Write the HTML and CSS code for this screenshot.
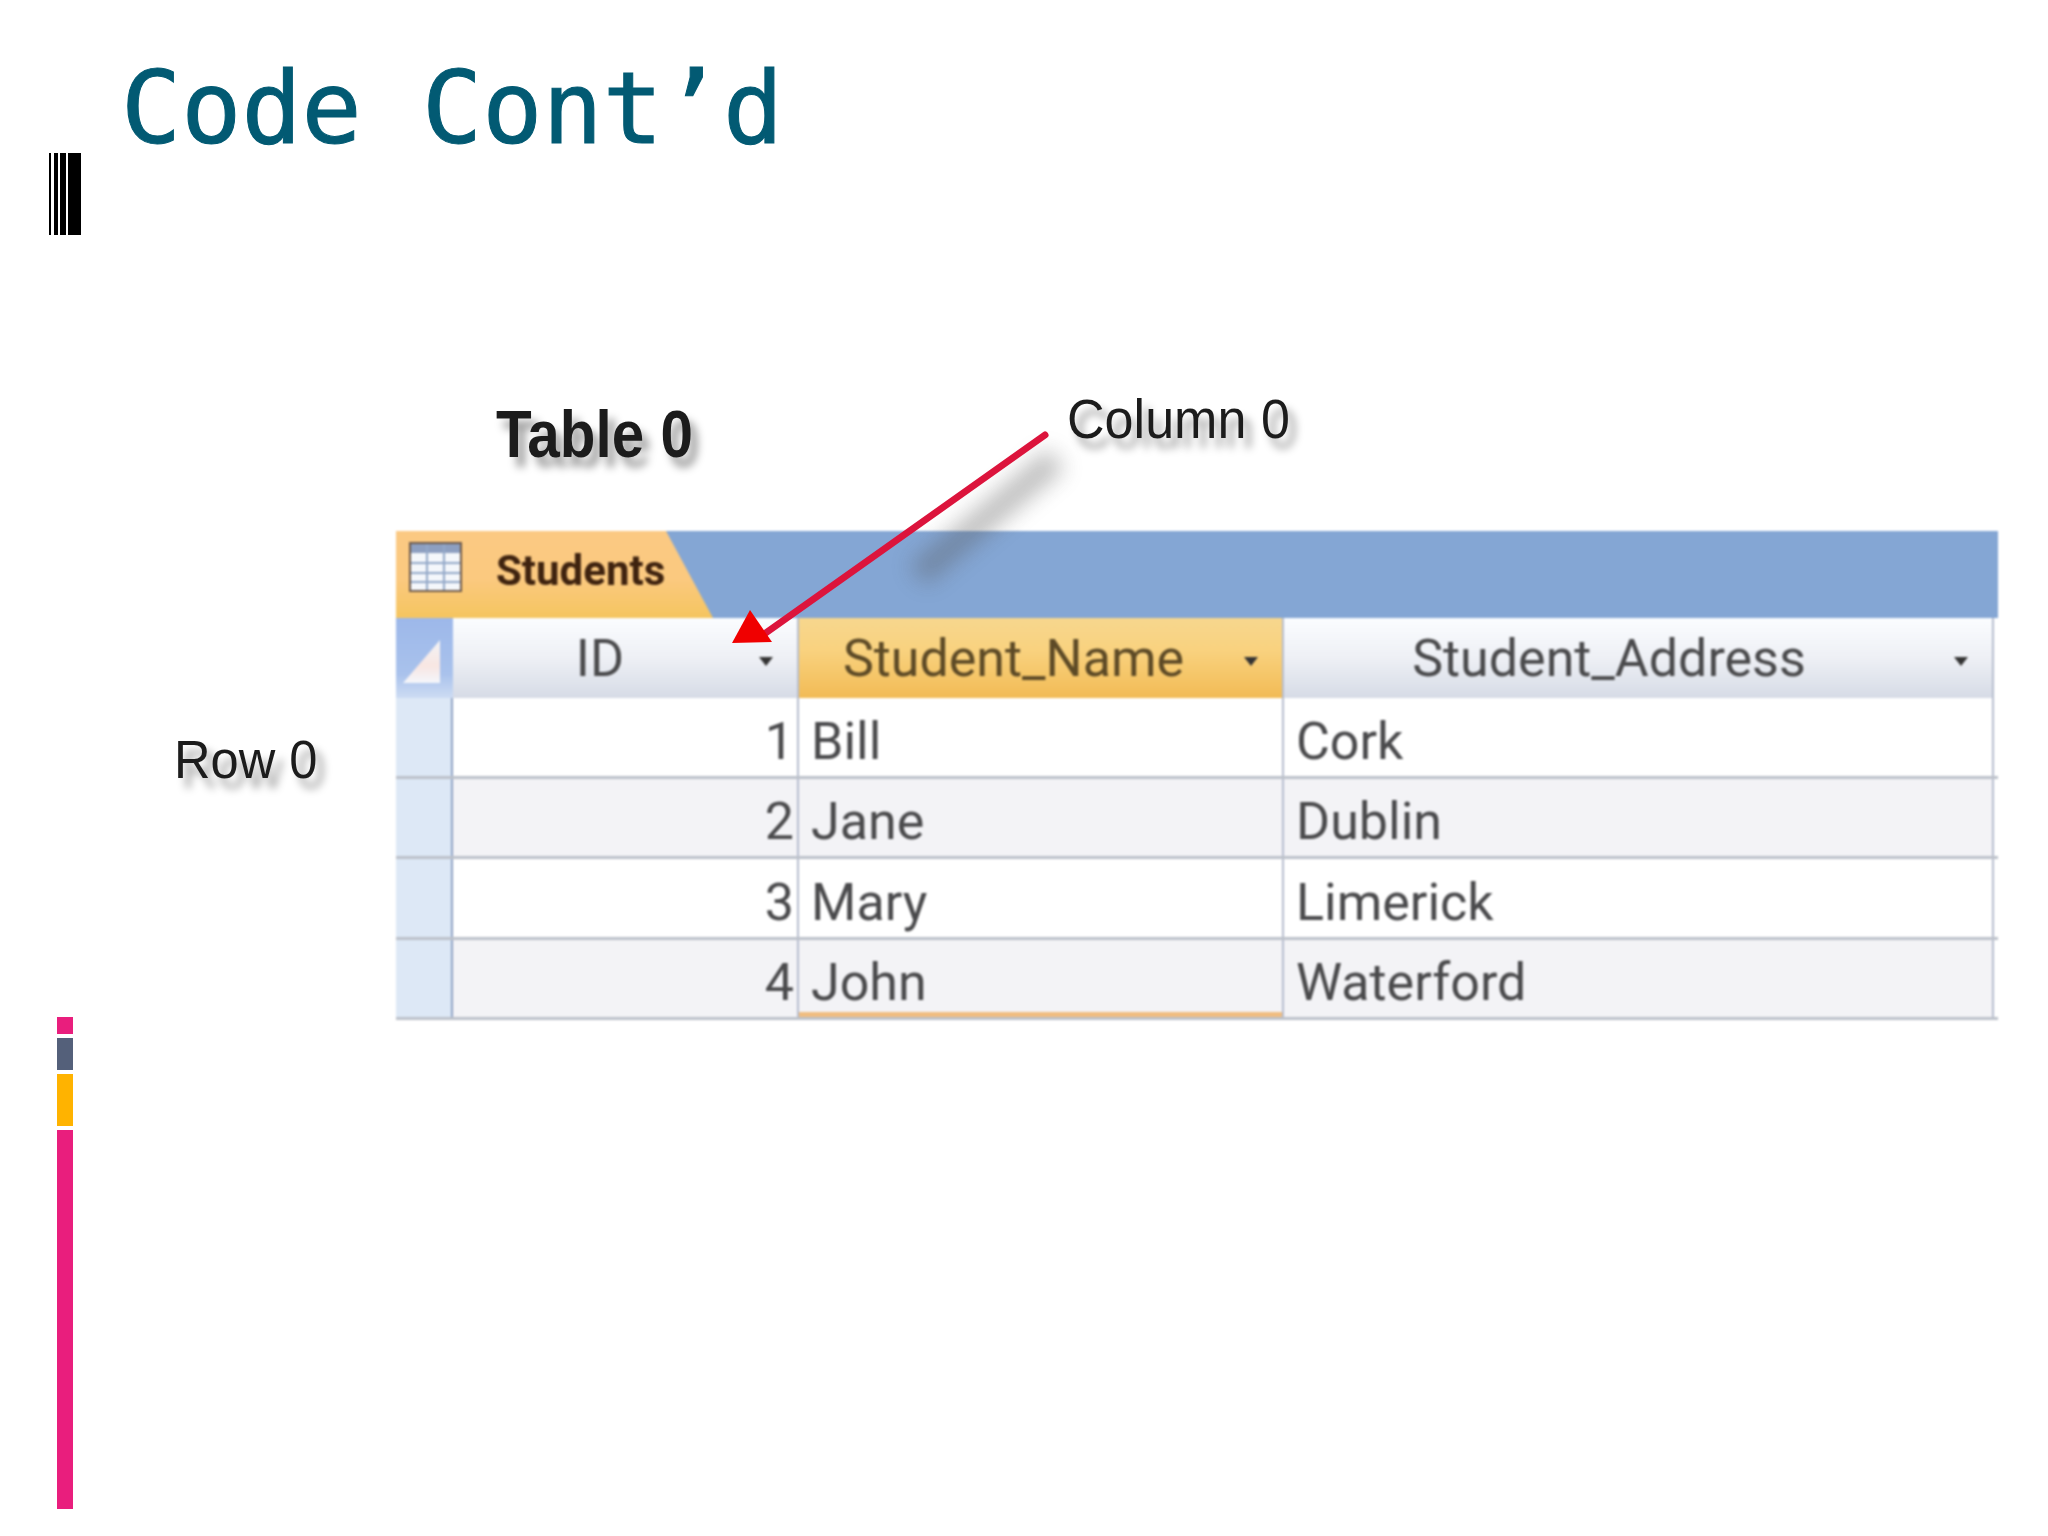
FILE: index.html
```html
<!DOCTYPE html>
<html lang="en">
<head>
  <meta charset="UTF-8">
  <title>Code Cont'd</title>
  <link rel="stylesheet" href="styles.css">
</head>
<body>
  <div class="slide">
    <aside class="rail">
      <div class="barcode"></div>
      <div class="accents">
        <span class="accent accent-pink-small"></span>
        <span class="accent accent-slate"></span>
        <span class="accent accent-amber"></span>
        <span class="accent accent-pink-long"></span>
      </div>
    </aside>

    <main class="content">
      <h1>Code Cont’d</h1>

      <figure class="figure">
        <span class="note note-table">Table 0</span>
        <span class="note note-column">Column 0</span>
        <span class="note note-row">Row 0</span>

        <div class="sheet">
          <div class="tabbar">
            <div class="tab">
              <svg class="tab-icon" viewBox="0 0 53 50" width="53" height="50">
                <rect x="1" y="1" width="51" height="48" fill="#f4f7fb" stroke="#6d5a4c" stroke-width="2"/>
                <rect x="2" y="2" width="49" height="9" fill="#8d9fc0"/>
                <path d="M2 21H51M2 31H51M2 40H51" stroke="#93a8c8" stroke-width="2"/>
                <path d="M18 2V48M35 2V48" stroke="#93a8c8" stroke-width="2"/>
              </svg>
              <span class="tab-label">Students</span>
            </div>
          </div>

          <div class="row row-head">
            <div class="cell selector corner"></div>
            <div class="cell head head-id">ID<i class="caret"></i></div>
            <div class="cell head head-active">Student_Name<i class="caret"></i></div>
            <div class="cell head head-address">Student_Address<i class="caret"></i></div>
          </div>
          <div class="row">
            <div class="cell selector"></div>
            <div class="cell num">1</div>
            <div class="cell text">Bill</div>
            <div class="cell text">Cork</div>
          </div>
          <div class="row row-alt">
            <div class="cell selector"></div>
            <div class="cell num">2</div>
            <div class="cell text">Jane</div>
            <div class="cell text">Dublin</div>
          </div>
          <div class="row">
            <div class="cell selector"></div>
            <div class="cell num">3</div>
            <div class="cell text">Mary</div>
            <div class="cell text">Limerick</div>
          </div>
          <div class="row row-alt">
            <div class="cell selector"></div>
            <div class="cell num">4</div>
            <div class="cell text cell-last">John</div>
            <div class="cell text">Waterford</div>
          </div>
        </div>

        <svg class="arrow" viewBox="0 0 400 260" width="400" height="260">
          <defs>
            <filter id="soft" x="-40%" y="-40%" width="180%" height="180%"><feGaussianBlur stdDeviation="11"/></filter>
          </defs>
          <path d="M352 74 L214 190" stroke="#555" stroke-width="26" opacity=".38" filter="url(#soft)"/>
          <path d="M341 50 L56 252" stroke="#dc143c" stroke-width="7" stroke-linecap="round"/>
          <path d="M28 258 L46 225 L68 257 Z" fill="#f00000"/>
        </svg>
      </figure>
    </main>
  </div>
</body>
</html>
```
FILE: styles.css
```css
* {
  box-sizing: border-box;
}
body {
  margin: 0;
  background: #fff;
}
.slide {
  width: 2048px;
  height: 1536px;
  display: grid;
  grid-template-columns: 124px 1fr;
  overflow: hidden;
}

/* left rail */
.rail {
  padding-top: 153px;
}
.barcode {
  width: 32px;
  height: 82px;
  margin-left: 49px;
  background: linear-gradient(to right,
    #000 0 2px, #fff 2px 5px,
    #000 5px 9px, #fff 9px 11px,
    #000 11px 17px, #fff 17px 19px,
    #000 19px 32px);
}
.accents {
  display: flex;
  flex-direction: column;
  gap: 4px;
  width: 16px;
  margin: 782px 0 0 57px;
}
.accent-pink-small {
  height: 17px;
  background: #e91e7d;
}
.accent-slate {
  height: 32px;
  background: #54607a;
}
.accent-amber {
  height: 52px;
  background: #ffb300;
}
.accent-pink-long {
  height: 379px;
  background: #e91e7d;
}

/* title */
h1 {
  margin: 0 0 0 -3px;
  padding-top: 49px;
  height: 380px;
  font-family: "DejaVu Sans Mono", monospace;
  font-size: 100px;
  line-height: 120px;
  font-weight: normal;
  color: #025a73;
  -webkit-text-stroke: 1px #025a73;
}

/* screenshot of the access table */
.figure {
  position: relative;
  margin: 0;
  padding: 151px 0 0 272px;
}
.note {
  position: absolute;
  font-family: "Liberation Sans", sans-serif;
  color: #1c1c1c;
  white-space: nowrap;
  text-shadow: 8px 10px 9px rgba(0, 0, 0, .38);
  transform-origin: left top;
  filter: blur(.7px);
}
.note-table {
  left: 372px;
  top: 16px;
  font-size: 66px;
  font-weight: bold;
  transform: scaleX(.885);
}
.note-column {
  left: 943px;
  top: 6px;
  font-size: 56px;
  transform: scaleX(.93);
}
.note-row {
  left: 50px;
  top: 349px;
  font-size: 53px;
  transform: scaleX(.955);
}
.sheet {
  width: 1602px;
  font-family: Roboto, sans-serif;
  color: #4a4a4c;
  filter: blur(.8px);
}
.tabbar {
  height: 87px;
  background: #84a6d4;
}
.tab {
  width: 317px;
  height: 87px;
  display: flex;
  align-items: flex-start;
  gap: 34px;
  padding-left: 13px;
  background: linear-gradient(#fbc983, #fbc97f 55%, #f5c55f);
  clip-path: polygon(0 0, 270px 0, 317px 100%, 0 100%);
}
.tab-icon {
  margin-top: 11px;
}
.tab-label {
  margin-top: 18px;
  font-size: 42px;
  line-height: 44px;
  font-weight: bold;
  color: #3f230f;
}
.row {
  display: grid;
  grid-template-columns: 57px 346px 485px 710px;
  height: 80.5px;
  border-bottom: 3px solid #bcc1ca;
}
.row-alt .cell {
  background: #f3f3f6;
}
.row-alt .selector {
  background: #dde8f6;
}
.row-head {
  height: 80px;
  border-bottom: 0;
}
.cell {
  display: flex;
  align-items: center;
  font-size: 52px;
  padding-top: 9px;
  border-right: 2px solid #b6bdce;
}
.selector {
  background: #dde8f6;
  border-right-color: #8fa3c4;
}
.corner {
  position: relative;
  background: linear-gradient(#9db8ea, #a9c2ec 70%, #cddcf3);
  border: 0;
}
.corner::after {
  content: "";
  position: absolute;
  left: 7px;
  top: 22px;
  width: 37px;
  height: 43px;
  background: linear-gradient(#f3f3f6, #f8e6e2 60%, #f4f7fc);
  clip-path: polygon(100% 0, 100% 100%, 0 100%);
}
.head {
  position: relative;
  justify-content: center;
  padding-top: 0;
  background: linear-gradient(#fbfdff, #eef0f5 50%, #d6dbe6);
}
.head-id {
  padding-right: 50px;
}
.head-address {
  padding-right: 58px;
}
.head-active {
  background: linear-gradient(#f7d78e, #f9d27f 40%, #f2bb55);
  color: #5d4a26;
  padding-right: 54px;
}
.caret {
  position: absolute;
  right: 24px;
  top: 39px;
  border-style: solid;
  border-width: 9px 7px 0;
  border-color: #333 transparent transparent;
}
.num {
  justify-content: flex-end;
  padding-right: 3px;
}
.text {
  padding-left: 12px;
}
.cell-last {
  box-shadow: inset 0 -5px 0 #f0bd80;
}
.arrow {
  position: absolute;
  left: 580px;
  top: 0;
  margin-top: 5px;
  pointer-events: none;
}
```
